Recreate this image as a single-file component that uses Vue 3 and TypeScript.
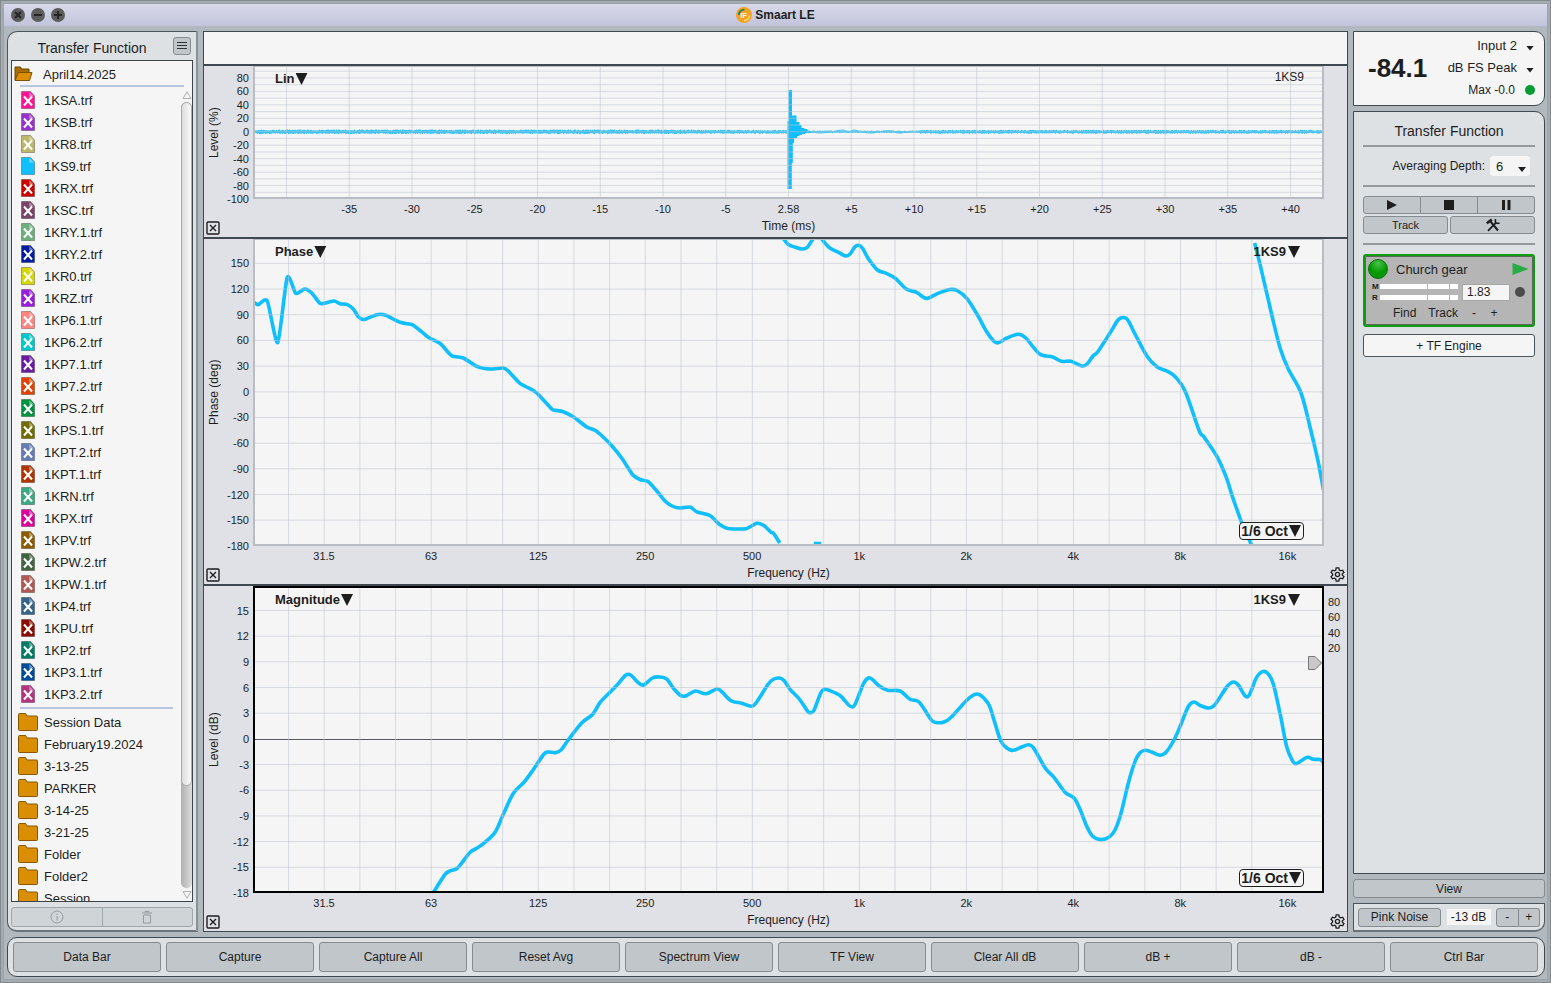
<script setup lang="ts">
import { ref } from 'vue'

type Point = [number, number]
interface Tick { label: string; at: number }
interface TraceFile { name: string; color: string; active?: boolean }

const files: TraceFile[] = [
  { name: '1KSA.trf', color: '#ff1493' },
  { name: '1KSB.trf', color: '#9932cc' },
  { name: '1KR8.trf', color: '#bdb76b' },
  { name: '1KS9.trf', color: '#0fbfff', active: true },
  { name: '1KRX.trf', color: '#cd0000' },
  { name: '1KSC.trf', color: '#7a4468' },
  { name: '1KRY.1.trf', color: '#6cb07c' },
  { name: '1KRY.2.trf', color: '#001c9c' },
  { name: '1KR0.trf', color: '#d6d600' },
  { name: '1KRZ.trf', color: '#9a1cdc' },
  { name: '1KP6.1.trf', color: '#ff8680' },
  { name: '1KP6.2.trf', color: '#00c8cc' },
  { name: '1KP7.1.trf', color: '#6a1ca0' },
  { name: '1KP7.2.trf', color: '#e04200' },
  { name: '1KPS.2.trf', color: '#009440' },
  { name: '1KPS.1.trf', color: '#726c00' },
  { name: '1KPT.2.trf', color: '#667cb4' },
  { name: '1KPT.1.trf', color: '#b03400' },
  { name: '1KRN.trf', color: '#3ca884' },
  { name: '1KPX.trf', color: '#dc009c' },
  { name: '1KPV.trf', color: '#8c5c00' },
  { name: '1KPW.2.trf', color: '#406440' },
  { name: '1KPW.1.trf', color: '#b05854' },
  { name: '1KP4.trf', color: '#34648c' },
  { name: '1KPU.trf', color: '#8c0c00' },
  { name: '1KP2.trf', color: '#007c64' },
  { name: '1KP3.1.trf', color: '#004c98' },
  { name: '1KP3.2.trf', color: '#b43480' },
]

const folders = ['Session Data', 'February19.2024', '3-13-25', 'PARKER', '3-14-25', '3-21-25', 'Folder', 'Folder2', 'Session']

const commands = ['Data Bar', 'Capture', 'Capture All', 'Reset Avg', 'Spectrum View', 'TF View', 'Clear All dB', 'dB +', 'dB -', 'Ctrl Bar']

const delay = ref('1.83')
const depth = ref('6')
const input = ref('Input 2')
const scale = ref('dB FS Peak')

// Plot boxes share one drawing space, so axes and traces use the same numbers.
const boxX = 253
const boxW = 1071
const xPct = (x: number) => `${((x - boxX) / boxW) * 100}%`
const yPct = (y: number, top: number, height: number) => `${((y - top) / height) * 100}%`

function steps(count: number, start: number, step: number): number[] {
  return Array.from({ length: count }, (_, i) => start + i * step)
}

function smooth(points: Point[], k: number): string {
  let d = `M${points[0][0]} ${points[0][1]}`
  for (let i = 0; i < points.length - 1; i++) {
    const a = points[Math.max(0, i - 1)]
    const b = points[i]
    const c = points[i + 1]
    const e = points[Math.min(points.length - 1, i + 2)]
    const c1 = [b[0] + (c[0] - a[0]) * k, b[1] + (c[1] - a[1]) * k]
    const c2 = [c[0] - (e[0] - b[0]) * k, c[1] - (e[1] - b[1]) * k]
    d += `C${c1[0].toFixed(1)} ${c1[1].toFixed(1)} ${c2[0].toFixed(1)} ${c2[1].toFixed(1)} ${c[0]} ${c[1]}`
  }
  return d
}

const timeGrid = steps(17, 286.5, 62.75)
const timeTicks: Tick[] = ['-35', '-30', '-25', '-20', '-15', '-10', '-5', '2.58', '+5', '+10', '+15', '+20', '+25', '+30', '+35', '+40']
  .map((label, i) => ({ label, at: 349.3 + i * 62.75 }))
const levelGrid = steps(19, 71.2, 6.73)
const levelTicks: Tick[] = ['80', '60', '40', '20', '0', '-20', '-40', '-60', '-80', '-100']
  .map((label, i) => ({ label, at: 78 + i * 13.46 }))

const freqGrid = steps(28, 288.5, 35.68)
const freqTicks: Tick[] = ['31.5', '63', '125', '250', '500', '1k', '2k', '4k', '8k', '16k']
  .map((label, i) => ({ label, at: 324 + i * 107.04 }))
const phaseGrid = steps(11, 263.4, 25.68)
const phaseTicks: Tick[] = ['150', '120', '90', '60', '30', '0', '-30', '-60', '-90', '-120', '-150', '-180']
  .map((label, i) => ({ label, at: 263.4 + i * 25.68 }))
const magGrid = steps(11, 610.5, 25.68).filter((_, i) => i !== 5)
const magTicks: Tick[] = ['15', '12', '9', '6', '3', '0', '-3', '-6', '-9', '-12', '-15', '-18']
  .map((label, i) => ({ label, at: 610.5 + i * 25.68 }))
const coherenceTicks: Tick[] = ['80', '60', '40', '20'].map((label, i) => ({ label, at: 602 + i * 15.4 }))

function noise(from: number, to: number, amp: (x: number) => number, seed: number): string {
  let s = seed
  const parts: string[] = []
  for (let x = from; x < to; x += 1) {
    s = (s * 16807) % 2147483647
    const up = amp(x) * (0.55 + (s / 2147483647) * 0.45)
    s = (s * 16807) % 2147483647
    const down = amp(x) * (0.55 + (s / 2147483647) * 0.45)
    parts.push(`M${x + 0.5} ${(131.8 - up).toFixed(1)}V${(131.8 + down).toFixed(1)}`)
  }
  return parts.join('')
}
const impulseBefore = noise(255, 787, (x) => (x < 700 ? 2.3 : 2), 77)
const impulseAfter = noise(806, 1322, (x) => (x < 920 ? 1.3 : 2), 913)
const impulseTail = smooth([[800, 131], [812, 132], [820, 133], [830, 132], [843, 130], [848, 132], [854, 130], [862, 132], [872, 133], [884, 131], [893, 131], [898, 133], [910, 132], [922, 131], [932, 132]], 0.16)
const impulseBurst = 'M787.5 121H788.5V90H792V115.5H796.5V122H799.5V125H801.5V128H804.5V129H807.5V131H811V133H805V134H802V135H799.5V136H797V138H794V143H792.8V163H791.8V189H787.5Z'

const phaseStart: Point[] = [[253.5, 302], [258.3, 304.7], [267.3, 301], [277.7, 342.5], [287.2, 277.5], [295.7, 293.3], [304.7, 289], [311.7, 293], [320, 303.3], [326.7, 302.7], [334.3, 301], [340, 303.7], [347.3, 304.7], [353.3, 309], [358.3, 316.7], [364.3, 319.5], [376.7, 314.7], [385, 315], [400, 322.3], [412.3, 324.7], [418.3, 329], [428.3, 337.3], [440, 343.3], [451.7, 355.7], [463.3, 358], [476.7, 366.3], [490, 369], [503.3, 368], [508.3, 371], [520, 383.3], [533.3, 390.5], [538.3, 394.5], [551.7, 409], [555, 410.3], [563.3, 411.7], [574, 417.3], [586.7, 427], [595, 430.3], [601, 435], [612, 446], [622, 458.5], [633, 475], [640, 479.5], [648, 481.5], [656, 490], [665, 501], [672, 506], [680, 508], [690, 507], [697, 512], [710, 515.5], [719, 524], [728, 528.5], [746, 528.7], [756.6, 523.3], [763.8, 525.5], [771, 532.3], [773.6, 533.3], [779.8, 543]]
const phaseBump: Point[] = [[782.8, 238], [788.3, 244.5], [795.4, 247.3], [802, 249], [807.3, 247.3], [813.5, 238]]
const phaseMid: Point[] = [[821, 238], [829, 247.3], [839, 252.7], [845.7, 256], [850, 254], [854.8, 247], [858.8, 245.3], [862.7, 248.5], [868.7, 259.3], [877.4, 270], [886.5, 273.5], [895.6, 278.5], [906.3, 289], [916.2, 292.2], [923.3, 297.2], [928, 298.2], [938, 293.3], [949.8, 289.5], [957, 290.5], [966.8, 298.3], [977.5, 315], [986.2, 331], [993.4, 340.7], [998, 342.8], [1007, 338], [1018.3, 334.2], [1025.8, 338], [1039.7, 354], [1052.7, 357], [1061.5, 361.3], [1071, 361.3], [1082, 366], [1087.2, 363.8], [1093, 356], [1098, 351.5], [1110, 333], [1118, 320], [1123.2, 317.5], [1128, 320.3], [1136, 336], [1147.8, 357.3], [1157.6, 367.3], [1167.6, 371.3], [1175.5, 377], [1185.4, 391.7], [1199.2, 430.7], [1204, 437], [1217, 456.7], [1226, 476.7], [1233, 498.3], [1242, 523.3], [1252, 546]]
const phaseEnd: Point[] = [[1254.6, 243], [1259.8, 263.3], [1272.5, 318], [1280.4, 349], [1288.3, 369], [1301, 393], [1310, 427], [1318, 461], [1323.5, 490]]
const phasePaths = [smooth(phaseStart, 0.11), smooth(phaseBump, 0.16), smooth(phaseMid, 0.16), smooth(phaseEnd, 0.16), 'M814 543.5H821']

const magnitude: Point[] = [[433.6, 892], [437, 886.7], [445.4, 874], [450.7, 870.7], [457, 868.5], [462, 862.7], [470.4, 852], [479.3, 846.7], [494.3, 833.3], [502.5, 816], [513.2, 793.5], [524, 782.2], [532.9, 770.2], [543.6, 754.5], [547.9, 752], [555, 752.7], [560.7, 750.3], [568.6, 739.5], [581.8, 722.8], [592.5, 714.5], [600.7, 701.7], [615, 687.3], [625.7, 675.3], [631, 675.3], [638.2, 682.7], [643.6, 685], [652.5, 678], [659.6, 677], [666.8, 679.2], [674, 689], [681, 695.7], [686.4, 695.7], [695.4, 691], [706, 693.8], [716.8, 689], [722.1, 692], [731, 700.7], [741.8, 703.3], [751.2, 706.3], [756.7, 702], [768.3, 684], [773.3, 679.3], [779.3, 678], [784, 680.5], [790, 689.3], [799.3, 699], [807.7, 711.3], [810.7, 712.6], [814, 710.3], [821, 692.5], [825, 689.3], [830, 690.7], [840, 695.5], [848.3, 704.7], [851.7, 706.7], [855, 704.5], [863.3, 684], [868.3, 678], [872.7, 679.8], [879.3, 686], [887.7, 690.3], [900, 691], [910, 699.3], [919, 702], [931, 719.6], [936, 722.4], [944, 722], [951.7, 716.7], [966.7, 700.2], [973.3, 695.2], [978.3, 694.2], [983.3, 697.5], [989.3, 705.5], [995, 723.3], [1000.7, 740.7], [1006.7, 748], [1013.3, 750.3], [1021.7, 747], [1028.3, 744.7], [1033.3, 747.6], [1043.3, 765], [1047.3, 770.7], [1054, 777.3], [1065, 792.2], [1074, 798], [1080, 809.3], [1086.7, 826.3], [1092.7, 836.3], [1100.7, 839.6], [1109.3, 837], [1115, 830], [1121, 813.3], [1128.3, 783.3], [1135, 761.7], [1140, 752.8], [1145.3, 750.2], [1151.7, 752], [1160, 755.2], [1166, 752.3], [1174, 740], [1180.7, 725], [1188.3, 706.5], [1194, 702], [1200, 705.3], [1208.3, 708], [1215, 704.6], [1226.7, 687], [1233.3, 682], [1238.3, 685], [1245, 695.8], [1249.3, 695], [1256, 678.5], [1261.7, 672], [1267.3, 673], [1273.3, 684], [1280.7, 716.7], [1286.7, 746.7], [1292.3, 760.3], [1296.7, 763.5], [1306.7, 757.4], [1313.3, 759.3], [1320, 759.5], [1323, 762]]
const magPath = smooth(magnitude, 0.16)

const gearPath = 'M6.600 1H9.400L9.900 3.300 11.300 4.100 13.500 3.400 14.900 5.800 13.200 7.300V8.700L14.900 10.200 13.500 12.600 11.300 11.900 9.900 12.700 9.400 15H6.600L6.100 12.700 4.700 11.900 2.500 12.600 1.100 10.200 2.800 8.700V7.300L1.100 5.800 2.500 3.400 4.700 4.100 6.100 3.300Z'
</script>

<template>
  <div class="window">
    <header class="titlebar">
      <div class="lights">
        <button type="button" class="light" aria-label="Close window">
          <svg viewBox="0 0 14 14"><path d="M4 4 10 10M10 4 4 10" /></svg>
        </button>
        <button type="button" class="light" aria-label="Minimize window">
          <svg viewBox="0 0 14 14"><path d="M3 7H11" /></svg>
        </button>
        <button type="button" class="light" aria-label="Zoom window">
          <svg viewBox="0 0 14 14"><path d="M3 7H11M7 3V11" /></svg>
        </button>
      </div>
      <h1 class="app-name">
        <svg class="logo" viewBox="0 0 16 16" aria-hidden="true">
          <circle cx="8" cy="8" r="8" fill="#f2a325" />
          <path d="M2.800 8A5.400 5.400 0 0 1 8.400 2.700" fill="none" stroke="#1c7f62" stroke-width="1.800" />
          <path d="M13.600 8.500A5.600 5.600 0 0 1 8 13.600" fill="none" stroke="#ffd565" stroke-width="1.600" />
          <text x="4.600" y="10.600" font-size="7" font-weight="bold" fill="#fff">IF</text>
        </svg>
        Smaart LE
      </h1>
    </header>

    <main class="workspace">
      <aside class="data-bar">
        <div class="data-head">
          <h2>Transfer Function</h2>
          <button type="button" class="menu-btn" aria-label="Data menu">
            <svg viewBox="0 0 16 16"><path d="M3 4.500H13M3 7.500H13M3 10.500H13" /></svg>
          </button>
        </div>
        <div class="browser">
          <button type="button" class="session">
            <svg class="folder-open" viewBox="0 0 19 16" aria-hidden="true">
              <path d="M1 14V1H6.500L7.500 3H15V7" fill="#a86c00" stroke="#6d4600" />
              <path d="M1 14.500 4.500 6.500H18L15.500 14.500Z" fill="#dd8f04" stroke="#7d5200" />
            </svg>
            April14.2025
          </button>
          <div class="rule"></div>
          <div class="browser-body">
            <div class="entries">
              <ul>
                <li v-for="f in files" :key="f.name">
                  <button type="button" class="entry">
                    <svg class="file-icon" viewBox="0 0 14 18" aria-hidden="true">
                      <path d="M.5.5H9.500L13.500 5V17.500H.5Z" :fill="f.color" stroke="#000" stroke-opacity=".28" />
                      <path d="M8.500 1 8 5.500H13Z" fill="#fff" fill-opacity=".4" />
                      <path v-if="!f.active" d="M3 5.500 11 14.500M11 5.500 3 14.500" stroke="#fff" stroke-width="2" />
                    </svg>
                    {{ f.name }}
                  </button>
                </li>
              </ul>
              <div class="rule short"></div>
              <ul>
                <li v-for="name in folders" :key="name">
                  <button type="button" class="entry wide-icon">
                    <svg class="folder-icon" viewBox="0 0 20 18" aria-hidden="true">
                      <path d="M.5 1.500Q.5.5 1.500.5H7.500L9 3H18.500Q19.500 3 19.500 4V16.500Q19.500 17.500 18.500 17.500H1.500Q.5 17.500.5 16.500Z" fill="#da8e04" stroke="#865600" />
                    </svg>
                    {{ name }}
                  </button>
                </li>
              </ul>
            </div>
            <div class="scroller" aria-hidden="true">
              <svg viewBox="0 0 10 8"><path d="M1 7.500H9L5 .8Z" /></svg>
              <div class="track"><div class="thumb"></div></div>
              <svg viewBox="0 0 10 8"><path d="M1 .5H9L5 7.200Z" /></svg>
            </div>
          </div>
        </div>
        <div class="data-actions">
          <button type="button" aria-label="Info">
            <svg viewBox="0 0 14 14"><circle cx="7" cy="7" r="6" /><path d="M7 6V10.500M7 3.500V5" /></svg>
          </button>
          <button type="button" aria-label="Delete">
            <svg viewBox="0 0 14 14"><path d="M2 3H12M5 2.500V1.500H9V2.500M3.500 5H10.500V13H3.500Z" /></svg>
          </button>
        </div>
      </aside>

      <section class="plots">
        <div class="strip"></div>

        <section class="panel time">
          <div class="y-axis">
            <span class="y-title">Level (%)</span>
            <span v-for="t in levelTicks" :key="t.label" class="tick y" :style="{ top: yPct(t.at, 66, 133) }">{{ t.label }}</span>
          </div>
          <div class="plot">
            <svg viewBox="255 67 1067 130" preserveAspectRatio="none">
              <path class="noise" :d="impulseBefore" />
              <path class="noise" :d="impulseAfter" />
              <path class="tail" :d="impulseTail" />
              <path class="burst" :d="impulseBurst" />
              <g class="grid">
                <path v-for="x in timeGrid" :key="'v' + x" :d="`M${x} 67V197`" />
                <path v-for="y in levelGrid" :key="'h' + y" :d="`M255 ${y}H1322`" />
              </g>
            </svg>
            <button type="button" class="pick kind">Lin<i></i></button>
            <span class="trace-name">1KS9</span>
          </div>
          <div></div>
          <div class="corner"><button type="button" class="close" aria-label="Close plot"><svg viewBox="0 0 14 14"><rect x="1" y="1" width="12" height="12" rx="1" /><path d="M4 4 10 10M10 4 4 10" /></svg></button></div>
          <div class="x-axis">
            <span v-for="t in timeTicks" :key="t.label" class="tick x" :style="{ left: xPct(t.at) }">{{ t.label }}</span>
            <span class="x-title">Time (ms)</span>
          </div>
          <div></div>
        </section>

        <section class="panel">
          <div class="y-axis">
            <span class="y-title">Phase (deg)</span>
            <span v-for="t in phaseTicks" :key="t.label" class="tick y" :style="{ top: yPct(t.at, 239, 307) }">{{ t.label }}</span>
          </div>
          <div class="plot">
            <svg viewBox="255 240 1067 304" preserveAspectRatio="none">
              <path v-for="d in phasePaths" :key="d" class="trace" :d="d" />
              <g class="grid">
                <path v-for="x in freqGrid" :key="'v' + x" :d="`M${x} 240V544`" />
                <path v-for="y in phaseGrid" :key="'h' + y" :d="`M255 ${y}H1322`" />
              </g>
            </svg>
            <button type="button" class="pick kind">Phase<i></i></button>
            <button type="button" class="pick source">1KS9<i></i></button>
            <button type="button" class="pick smoothing">1/6 Oct<i></i></button>
          </div>
          <div></div>
          <div class="corner"><button type="button" class="close" aria-label="Close plot"><svg viewBox="0 0 14 14"><rect x="1" y="1" width="12" height="12" rx="1" /><path d="M4 4 10 10M10 4 4 10" /></svg></button></div>
          <div class="x-axis">
            <span v-for="t in freqTicks" :key="t.label" class="tick x" :style="{ left: xPct(t.at) }">{{ t.label }}</span>
            <span class="x-title">Frequency (Hz)</span>
          </div>
          <div class="corner"><button type="button" class="gear" aria-label="Plot settings"><svg viewBox="0 0 16 16"><path :d="gearPath" /><circle cx="8" cy="8" r="2.200" /></svg></button></div>
        </section>

        <section class="panel selected">
          <div class="y-axis">
            <span class="y-title">Level (dB)</span>
            <span v-for="t in magTicks" :key="t.label" class="tick y" :style="{ top: yPct(t.at, 586, 307) }">{{ t.label }}</span>
          </div>
          <div class="plot">
            <svg viewBox="255 588 1067 303" preserveAspectRatio="none">
              <path class="zero" d="M255 739.500H1322" />
              <path class="trace" :d="magPath" />
              <g class="grid">
                <path v-for="x in freqGrid" :key="'v' + x" :d="`M${x} 588V891`" />
                <path v-for="y in magGrid" :key="'h' + y" :d="`M255 ${y}H1322`" />
              </g>
            </svg>
            <button type="button" class="pick kind">Magnitude<i></i></button>
            <button type="button" class="pick source">1KS9<i></i></button>
            <button type="button" class="pick smoothing">1/6 Oct<i></i></button>
            <svg class="handle" viewBox="0 0 14 14" :style="{ top: yPct(663, 588, 303) }" aria-hidden="true">
              <path d="M.5.5H7L13.500 7 7 13.500H.5Z" stroke="#777" />
            </svg>
          </div>
          <div class="coherence">
            <span v-for="t in coherenceTicks" :key="t.label" class="tick c" :style="{ top: yPct(t.at, 586, 307) }">{{ t.label }}</span>
          </div>
          <div class="corner"><button type="button" class="close" aria-label="Close plot"><svg viewBox="0 0 14 14"><rect x="1" y="1" width="12" height="12" rx="1" /><path d="M4 4 10 10M10 4 4 10" /></svg></button></div>
          <div class="x-axis">
            <span v-for="t in freqTicks" :key="t.label" class="tick x" :style="{ left: xPct(t.at) }">{{ t.label }}</span>
            <span class="x-title">Frequency (Hz)</span>
          </div>
          <div class="corner"><button type="button" class="gear" aria-label="Plot settings"><svg viewBox="0 0 16 16"><path :d="gearPath" /><circle cx="8" cy="8" r="2.200" /></svg></button></div>
        </section>
      </section>

      <aside class="control-bar">
        <section class="meter">
          <strong>-84.1</strong>
          <div class="meter-side">
            <label class="drop"><select v-model="input" aria-label="Input"><option>Input 2</option></select></label>
            <label class="drop"><select v-model="scale" aria-label="Meter scale"><option>dB FS Peak</option></select></label>
            <div class="max"><span>Max -0.0</span><b></b></div>
          </div>
        </section>

        <section class="tf">
          <h2>Transfer Function</h2>
          <div class="depth">
            <label for="depth">Averaging Depth:</label>
            <span class="drop box"><select id="depth" v-model="depth"><option>6</option></select></span>
          </div>
          <div class="engine-controls">
            <div class="joined">
              <button type="button" aria-label="Run"><svg viewBox="0 0 12 12"><path d="M1 1 11 6 1 11Z" /></svg></button>
              <button type="button" aria-label="Stop"><svg viewBox="0 0 12 12"><path d="M1 1H11V11H1Z" /></svg></button>
              <button type="button" aria-label="Pause"><svg viewBox="0 0 12 12"><path d="M2 1H5V11H2ZM7.500 1H10.500V11H7.500Z" /></svg></button>
            </div>
            <div class="pair">
              <button type="button">Track</button>
              <button type="button" aria-label="Tools">
                <svg class="tools" viewBox="0 0 16 14">
                  <path d="M5.500 3.500 13 12.500" stroke-width="2" />
                  <path d="M1.800 5.300 6.800 1.600" stroke-width="2.600" />
                  <path d="M3 12.800 10.800 4.800" stroke-width="1.800" />
                  <path d="M10.400 1V4.200L11.500 5.300H14.600" stroke-width="1.600" />
                </svg>
              </button>
            </div>
          </div>
          <article class="engine">
            <div class="engine-head">
              <span class="ball"></span>
              <span class="engine-name">Church gear</span>
              <button type="button" aria-label="Start engine"><svg viewBox="0 0 17 12"><path d="M.5 0 16.500 6 .5 12Z" /></svg></button>
            </div>
            <div class="engine-levels">
              <div class="bars">
                <b>M</b><span class="bar"></span>
                <b>R</b><span class="bar"></span>
              </div>
              <input v-model="delay" type="text" aria-label="Delay in milliseconds" />
              <span class="dot"></span>
            </div>
            <div class="engine-actions">
              <button type="button">Find</button>
              <button type="button">Track</button>
              <button type="button" aria-label="Decrease delay">-</button>
              <button type="button" aria-label="Increase delay">+</button>
            </div>
          </article>
          <button type="button" class="add-engine">+ TF Engine</button>
        </section>

        <button type="button" class="view-btn">View</button>

        <section class="generator">
          <button type="button" class="pink">Pink Noise</button>
          <span class="gain">-13 dB</span>
          <div class="joined">
            <button type="button" aria-label="Lower level">-</button>
            <button type="button" aria-label="Raise level">+</button>
          </div>
        </section>
      </aside>
    </main>

    <nav class="command-bar" aria-label="Commands">
      <button v-for="c in commands" :key="c" type="button">{{ c }}</button>
    </nav>
  </div>
</template>

<style>
body {
  margin: 0;
}
</style>

<style scoped>
* {
  box-sizing: border-box;
}
.window {
  display: flex;
  flex-direction: column;
  height: 100vh;
  min-height: 720px;
  padding: 3px;
  border: 1px solid #84898d;
  background: #b1b9bf;
  box-shadow: inset 0 0 0 2px #a4abb1, inset 0 0 0 3px #9ba3a9;
  color: #1e1e1e;
  font-family: "Liberation Sans", Arial, sans-serif;
  font-size: 12px;
}
button,
input,
select {
  font: inherit;
  color: inherit;
  margin: 0;
  padding: 0;
  border: 0;
  background: none;
}
h1,
h2,
ul {
  margin: 0;
  padding: 0;
  list-style: none;
  font-weight: normal;
}
h2 {
  font-size: 14px;
  line-height: 18px;
}

.titlebar {
  flex: none;
  display: grid;
  grid-template-columns: 1fr auto 1fr;
  align-items: center;
  height: 22px;
  padding: 0 7px;
  background: linear-gradient(#d8daea, #c1c4da);
}
.lights {
  display: flex;
  gap: 6px;
}
.light {
  width: 14px;
  height: 14px;
  border-radius: 50%;
  background: #5c5c5c;
}
.light svg {
  display: block;
  fill: none;
  stroke: #262626;
  stroke-width: 2;
}
.app-name {
  display: flex;
  align-items: center;
  gap: 3px;
  font-size: 12px;
  font-weight: bold;
}
.logo {
  width: 16px;
  height: 16px;
}

.workspace {
  flex: 1;
  min-height: 0;
  display: grid;
  grid-template-columns: 191px minmax(0, 1fr) 192px;
  column-gap: 5px;
  padding: 5px 2px 5px 3px;
}

.data-bar {
  display: flex;
  flex-direction: column;
  min-height: 0;
  padding: 0 3px;
  padding-bottom: 3px;
  border: 1px solid #4b545a;
  border-right: 2px solid #899197;
  border-bottom: 2px solid #6b7379;
  border-radius: 10px 0 0 10px;
  background: #dde1e4;
}
.data-head {
  display: flex;
  align-items: center;
  height: 28px;
}
.data-head h2 {
  flex: 1;
  padding-top: 3px;
  text-align: center;
}
.menu-btn {
  width: 18px;
  height: 18px;
  margin-right: 2px;
  border: 1px solid #858c91;
  border-radius: 3px;
  background: #c0c6ca;
}
.menu-btn svg {
  display: block;
  width: 16px;
  height: 16px;
  fill: none;
  stroke: #2c3236;
}
.browser {
  flex: 1;
  min-height: 0;
  display: flex;
  flex-direction: column;
  border: 1px solid #3d454b;
  background: #f5f5f5;
  font-size: 13px;
}
.session {
  flex: none;
  display: flex;
  align-items: center;
  gap: 10px;
  height: 24px;
  padding: 2px 0 0 2px;
}
.folder-open {
  width: 19px;
  height: 16px;
}
.rule {
  flex: none;
  height: 2px;
  margin: 0 8px;
  background: #b8c5dc;
}
.rule.short {
  margin: 2px 0 2px 8px;
}
.browser-body {
  flex: 1;
  min-height: 0;
  display: flex;
}
.entries {
  flex: 1;
  padding-top: 2px;
  margin-right: 8px;
  overflow-y: auto;
  scrollbar-width: none;
}
.entry {
  display: flex;
  align-items: center;
  gap: 9px;
  width: 100%;
  height: 22px;
  padding-left: 9px;
  text-align: left;
}
.entry.wide-icon {
  gap: 6px;
  padding-left: 6px;
}
.file-icon {
  width: 14px;
  height: 18px;
  fill: none;
}
.folder-icon {
  width: 20px;
  height: 18px;
}
.scroller {
  flex: none;
  display: flex;
  flex-direction: column;
  align-items: center;
  gap: 3px;
  width: 11px;
  padding: 4px 0 2px;
}
.scroller svg {
  width: 10px;
  height: 8px;
  fill: #f5f5f5;
  stroke: #b0b0b0;
}
.track {
  flex: 1;
  width: 11px;
  border-radius: 6px;
  background: linear-gradient(90deg, #b0b0b0, #dcdcdc);
}
.thumb {
  height: 87%;
  border: 1px solid #adadad;
  border-radius: 6px;
  background: linear-gradient(90deg, #dcdcdc, #fafafa);
}
.data-actions {
  flex: none;
  display: flex;
  height: 20px;
  margin-top: 5px;
  border: 1px solid #9fa6ab;
  border-radius: 3px;
  background: #cfd4d7;
}
.data-actions button {
  flex: 1;
  display: grid;
  place-items: center;
}
.data-actions button + button {
  border-left: 1px solid #9fa6ab;
}
.data-actions svg {
  width: 14px;
  height: 14px;
  fill: none;
  stroke: #969ca0;
}

.plots {
  display: flex;
  flex-direction: column;
  min-width: 0;
  border: 1px solid #3f484f;
  background: #dfe1e6;
}
.strip {
  flex: none;
  height: 32px;
  background: #f5f5f5;
}
.panel {
  flex: 307 1 40px;
  min-height: 0;
  display: grid;
  grid-template-columns: 49px minmax(0, 1fr) 23px;
  grid-template-rows: minmax(0, 1fr) 38px;
  border-top: 2px solid #3f484f;
}
.panel.time {
  flex-grow: 133;
}
.y-axis,
.coherence {
  position: relative;
}
.y-title {
  display: block;
  width: 14px;
  height: 100%;
  margin-left: 3px;
  text-align: center;
  line-height: 14px;
  writing-mode: vertical-rl;
  transform: rotate(180deg);
}
.tick {
  position: absolute;
  font-size: 11px;
  line-height: 12px;
}
.tick.y {
  right: 4px;
  transform: translateY(-50%);
}
.tick.c {
  left: 4px;
  transform: translateY(-50%);
}
.tick.x {
  top: 4px;
  transform: translateX(-50%);
}
.plot {
  position: relative;
  min-width: 0;
  border: 2px solid #b9bcc3;
  border-top-width: 1px;
  background: #f5f5f5;
}
.selected .plot {
  border: 2px solid #000;
}
.plot > svg:first-child {
  display: block;
  position: absolute;
  width: 100%;
  height: 100%;
  overflow: hidden;
}
.plot path {
  fill: none;
  vector-effect: non-scaling-stroke;
}
.grid path {
  stroke: rgba(190, 194, 205, 0.55);
}
.plot .trace {
  stroke: #0fbfff;
  stroke-width: 3.6;
  stroke-linejoin: round;
}
.plot .noise {
  stroke: #2fc3fa;
}
.plot .tail {
  stroke: #3cc6fa;
}
.plot .burst {
  fill: #0fbfff;
}
.plot .zero {
  stroke: #57595f;
}
.pick {
  position: absolute;
  display: flex;
  align-items: center;
  font-size: 13px;
  font-weight: bold;
  line-height: 16px;
}
.pick i {
  width: 12px;
  height: 12px;
  margin-left: 1px;
  background: #1e1e1e;
  clip-path: polygon(0 0, 100% 0, 50% 100%);
}
.kind {
  top: 4px;
  left: 20px;
}
.source {
  top: 4px;
  right: 22px;
}
.source i {
  margin-left: 2px;
}
.smoothing {
  right: 18px;
  bottom: 4px;
  height: 18px;
  padding: 0 2px 0 1px;
  border: 1px solid #1e1e1e;
  border-radius: 4px;
  background: #f5f5f5;
  font-size: 14px;
}
.trace-name {
  position: absolute;
  top: 3px;
  right: 18px;
  line-height: 14px;
}
.handle {
  position: absolute;
  right: 0;
  width: 14px;
  height: 14px;
  transform: translateY(-50%);
}
.handle path {
  fill: #c9c9c9;
}
.x-axis {
  position: relative;
  display: flex;
  justify-content: center;
  padding-top: 20px;
}
.x-title {
  line-height: 14px;
}
.corner {
  display: flex;
  align-items: flex-end;
  padding: 0 2px 2px;
}
.close,
.gear {
  width: 14px;
  height: 14px;
}
.corner svg {
  display: block;
  fill: none;
  stroke: #1e1e1e;
  stroke-width: 1.4;
}
.gear {
  width: 16px;
  height: 16px;
  margin-left: 4px;
}

.control-bar {
  display: flex;
  flex-direction: column;
  min-height: 0;
}
.meter {
  flex: none;
  display: flex;
  justify-content: space-between;
  align-items: center;
  height: 75px;
  padding: 0 9px 0 14px;
  border: 1px solid #3f484f;
  border-radius: 0 10px 10px 0;
  background: #f5f5f5;
}
.meter strong {
  font-size: 26px;
}
.meter-side {
  display: flex;
  flex-direction: column;
  align-items: flex-end;
  padding-bottom: 2px;
}
.drop {
  position: relative;
  display: flex;
  align-items: center;
  height: 22px;
  font-size: 13px;
}
.drop::after {
  content: "";
  position: absolute;
  right: 1px;
  top: 11px;
  width: 8px;
  height: 5px;
  background: #1e1e1e;
  clip-path: polygon(0 0, 100% 0, 50% 100%);
  pointer-events: none;
}
.drop select {
  appearance: none;
  padding-right: 18px;
  text-align: right;
}
.max {
  display: flex;
  align-items: center;
  gap: 10px;
  height: 22px;
}
.max b {
  width: 10px;
  height: 10px;
  border-radius: 50%;
  background: #009c33;
}
.tf {
  flex: 1;
  min-height: 0;
  margin-top: 5px;
  padding: 10px 9px;
  border: 1px solid #3f484f;
  border-radius: 0 10px 0 0;
  background: #dde1e4;
}
.tf h2 {
  padding-bottom: 5px;
  border-bottom: 2px solid #93989b;
  text-align: center;
}
.depth {
  display: flex;
  justify-content: flex-end;
  align-items: center;
  gap: 5px;
  height: 40px;
  padding-right: 5px;
  border-bottom: 2px solid #93989b;
}
.drop.box {
  height: 20px;
  border-radius: 3px;
  background: #f5f5f5;
}
.drop.box::after {
  right: 4px;
}
.drop.box select {
  width: 40px;
  padding-left: 6px;
  text-align: left;
}
.engine-controls {
  padding: 9px 0;
  border-bottom: 2px solid #93989b;
}
.joined,
.pair {
  display: flex;
}
.pair {
  gap: 2px;
  margin-top: 2px;
}
.joined button,
.pair button,
.pink,
.view-btn,
.command-bar button {
  border: 1px solid #858c91;
  background: #c0c6ca;
}
.joined button,
.pair button {
  flex: 1;
  display: grid;
  place-items: center;
  height: 18px;
  font-size: 11px;
}
.pair button,
.pink,
.view-btn,
.command-bar button {
  border-radius: 3px;
}
.joined button + button {
  border-left: 0;
}
.joined button:first-child {
  border-radius: 3px 0 0 3px;
}
.joined button:last-child {
  border-radius: 0 3px 3px 0;
}
.joined svg {
  width: 12px;
  height: 12px;
  fill: #1e1e1e;
}
.tools {
  width: 16px;
  height: 14px;
  fill: none;
  stroke: #1e1e1e;
}
.engine {
  margin-top: 9px;
  padding: 2px 4px;
  height: 73px;
  border: 2px solid #0f9c0f;
  border-radius: 3px;
  background: #b5b5b5;
  box-shadow: inset 0 0 0 1px #5c665c;
}
.engine-head {
  display: flex;
  align-items: center;
  gap: 8px;
  height: 22px;
  font-size: 13px;
}
.ball {
  width: 20px;
  height: 20px;
  margin-left: -1px;
  border: 1px solid #0a6e0a;
  border-radius: 50%;
  background: radial-gradient(circle at 50% 20%, #4cc04c, #009a00 55%);
}
.engine-name {
  flex: 1;
}
.engine-head svg {
  display: block;
  width: 17px;
  height: 12px;
  fill: #2aac44;
}
.engine-levels {
  display: flex;
  align-items: center;
  gap: 4px;
  height: 24px;
  padding: 0 4px 0 3px;
}
.bars {
  flex: 1;
  display: grid;
  grid-template-columns: 8px 1fr;
  align-items: center;
  row-gap: 1px;
  font-size: 8px;
  line-height: 10px;
}
.bar {
  height: 5px;
  background: linear-gradient(90deg, #fff 60%, #b5b5b5 60% 61%, #fff 61% 89%, #b5b5b5 89% 90%, #fff 90%);
}
.engine-levels input {
  width: 48px;
  height: 17px;
  padding: 0 4px;
  border: 1px solid #a6a6a6;
  background: #f5f5f5;
}
.dot {
  width: 10px;
  height: 10px;
  margin-left: 1px;
  border-radius: 50%;
  background: #4b4b4b;
}
.engine-actions {
  display: flex;
  gap: 12px;
  padding-left: 24px;
  line-height: 18px;
}
.engine-actions button:nth-child(n + 3) {
  width: 8px;
}
.add-engine {
  width: 100%;
  height: 23px;
  margin-top: 7px;
  border: 1px solid #4b545a;
  border-radius: 3px;
  background: #f5f5f5;
}
.view-btn {
  flex: none;
  height: 19px;
  margin: 5px 0;
}
.generator {
  flex: none;
  display: flex;
  justify-content: space-between;
  align-items: center;
  height: 29px;
  padding: 0 4px;
  border: 1px solid #4b545a;
  border-bottom: 2px solid #6b7379;
  border-radius: 0 0 10px 0;
  background: #dde1e4;
}
.pink {
  width: 83px;
  height: 19px;
}
.gain {
  width: 44px;
  background: #f5f5f5;
  text-align: center;
  line-height: 16px;
}
.generator .joined {
  width: 44px;
}
.generator .joined button {
  height: 19px;
  font-size: 12px;
}

.command-bar {
  flex: none;
  display: flex;
  gap: 5px;
  height: 40px;
  margin: 0 2px 2px 3px;
  padding: 4px 6px 4px 5px;
  border: 1px solid #3f484f;
  border-radius: 10px;
  background: #dde1e4;
}
.command-bar button {
  flex: 1;
}
</style>
